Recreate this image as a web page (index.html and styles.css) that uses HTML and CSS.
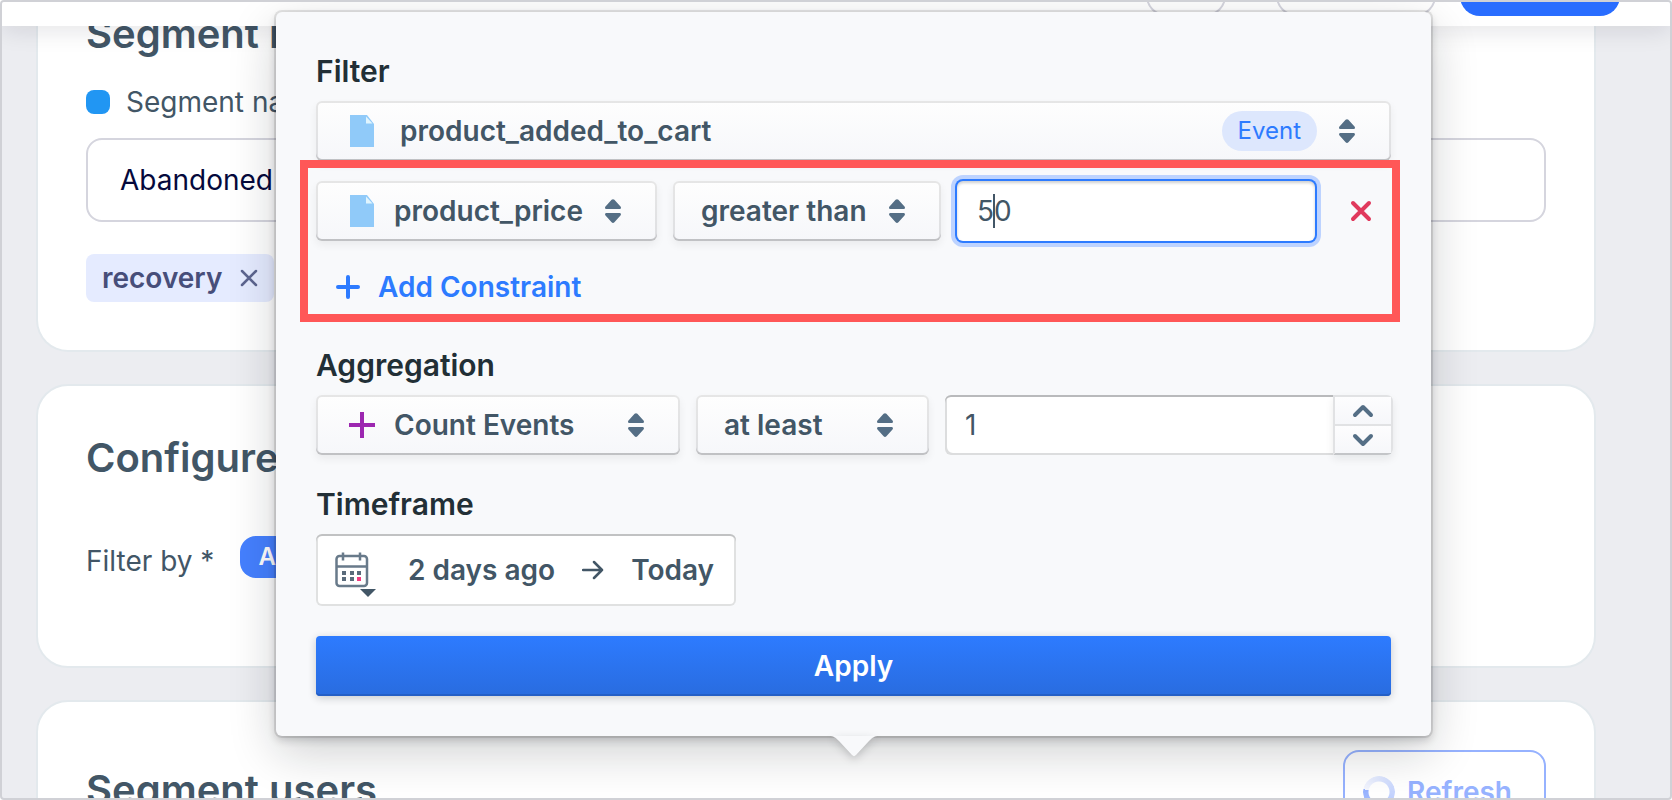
FILE: index.html
```
<!DOCTYPE html>
<html lang="en">
<head>
  <meta charset="UTF-8" />
  <meta name="viewport" content="width=device-width, initial-scale=1.0"/>
  <title>Segment</title>
  <link rel="stylesheet" href="styles.css">
</head>
<body>

<!-- shared icons -->
<svg class="sprite" aria-hidden="true">
  <symbol id="icon-file" viewBox="0 0 24 32">
    <path fill="#90caf9" d="M0 0h17l7 9v23H0z"/>
    <path fill="#e1f5fe" d="M16 1.500v7h6.500z"/>
  </symbol>
  <symbol id="icon-sort" viewBox="0 0 16 24">
    <path fill="#546e85" d="M1.500 10h13c1.300 0 2-1.400 1-2.400L9.400.800c-.8-.9-2-.9-2.800 0L.5 7.600c-1 1-.3 2.400 1 2.400zM1.500 14h13c1.300 0 2 1.400 1 2.400l-6.100 6.800c-.8.9-2 .9-2.800 0L.5 16.400c-1-1-.3-2.400 1-2.400z"/>
  </symbol>
</svg>

<div class="app">
  <header class="topbar">
    <button type="button" class="top-btn top-small" aria-label="More"></button>
    <button type="button" class="top-btn top-wide" aria-label="Preview"></button>
    <button type="button" class="top-btn top-primary" aria-label="Save"></button>
  </header>

  <main>
    <section class="card card-info">
      <h2>Segment information</h2>
      <label class="name-label" for="segment-name"><span class="swatch"></span>Segment name *</label>
      <input class="name-input" type="text" id="segment-name" value="Abandoned cart">
      <div class="tag">recovery
        <button type="button" aria-label="Remove tag">
          <svg width="18" height="18" viewBox="0 0 18 18"><path d="M2 2l14 14M16 2L2 16" stroke="#5d6590" stroke-width="2.500" stroke-linecap="round"/></svg>
        </button>
      </div>
    </section>

    <section class="card card-configure">
      <h2>Configure segment</h2>
      <div class="filter-by">
        <span class="filter-label">Filter by *</span>
        <button type="button" class="pill">All users</button>
      </div>
    </section>

    <section class="card card-users">
      <h2>Segment users</h2>
      <button type="button" class="refresh">
        <span class="spinner"></span>
        Refresh
      </button>
    </section>
  </main>

  <form class="popover">
    <h3>Filter</h3>
    <div class="select">
      <svg class="lead" width="24" height="32"><use href="#icon-file"/></svg>
      <select class="has-icon wide" aria-label="Event"><option>product_added_to_cart</option></select>
      <span class="badge">Event</span>
      <svg class="sort" width="16" height="24"><use href="#icon-sort"/></svg>
    </div>

    <div class="constraints">
      <div class="row">
        <div class="select property">
          <svg class="lead" width="24" height="32"><use href="#icon-file"/></svg>
          <select class="has-icon" aria-label="Property"><option>product_price</option></select>
          <svg class="sort" width="16" height="24"><use href="#icon-sort"/></svg>
        </div>
        <div class="select operator">
          <select aria-label="Operator"><option>greater than</option></select>
          <svg class="sort" width="16" height="24"><use href="#icon-sort"/></svg>
        </div>
        <div class="value">
          <input type="text" class="field active" aria-label="Value" value="50">
          <span class="caret"></span>
        </div>
        <button type="button" class="remove" aria-label="Remove constraint">
          <svg width="22" height="22" viewBox="0 0 22 22"><path d="M3 3l16 16M19 3L3 19" stroke="#e0395c" stroke-width="4" stroke-linecap="round"/></svg>
        </button>
      </div>
      <button type="button" class="add">
        <svg width="24" height="24" viewBox="0 0 24 24"><path d="M12 2v20M2 12h20" stroke="#2d7bff" stroke-width="4" stroke-linecap="round"/></svg>
        Add Constraint
      </button>
    </div>

    <h3>Aggregation</h3>
    <div class="row aggregation">
      <div class="select count">
        <svg class="lead" width="28" height="28" viewBox="0 0 28 28"><path d="M14 1v26M1 14h26" stroke="#9c27b0" stroke-width="4"/></svg>
        <select class="has-icon" aria-label="Aggregation"><option>Count Events</option></select>
        <svg class="sort" width="16" height="24"><use href="#icon-sort"/></svg>
      </div>
      <div class="select compare">
        <select aria-label="Comparison"><option>at least</option></select>
        <svg class="sort" width="16" height="24"><use href="#icon-sort"/></svg>
      </div>
      <div class="number">
        <input type="text" inputmode="numeric" class="field" aria-label="Amount" value="1">
        <div class="stepper">
          <button type="button" aria-label="Increase">
            <svg width="22" height="14" viewBox="0 0 22 14"><path d="M3 11l8-8 8 8" fill="none" stroke="#546e85" stroke-width="4" stroke-linecap="round" stroke-linejoin="round"/></svg>
          </button>
          <button type="button" aria-label="Decrease">
            <svg width="22" height="14" viewBox="0 0 22 14"><path d="M3 3l8 8 8-8" fill="none" stroke="#546e85" stroke-width="4" stroke-linecap="round" stroke-linejoin="round"/></svg>
          </button>
        </div>
      </div>
    </div>

    <h3>Timeframe</h3>
    <button type="button" class="timeframe">
      <svg class="calendar" width="47" height="48" viewBox="0 0 47 48">
        <g fill="none" stroke="#687a8a" stroke-width="2.500">
          <rect x="2.500" y="5" width="30.500" height="30" rx="3"/>
          <path d="M2 15.500h31M9 1.500v8M26 1.500v8"/>
        </g>
        <path fill="#5a6b7b" d="M8 20h4v4H8zM16 20h4v4h-4zM23 20h4v4h-4zM8 26h4v4H8zM16 26h4v4h-4z"/>
        <path fill="#f5397f" d="M23 26h4v4h-4z"/>
        <path fill="#425666" d="M26 38h16l-8 8z"/>
      </svg>
      <span>2 days ago</span>
      <svg width="22" height="20" viewBox="0 0 22 20"><path d="M1 10h19M12 2l8 8-8 8" fill="none" stroke="#425666" stroke-width="2.500" stroke-linecap="round" stroke-linejoin="round"/></svg>
      <span>Today</span>
    </button>

    <button type="submit" class="apply">Apply</button>
    <svg class="arrow" width="50" height="21" viewBox="0 0 50 21"><path fill="#f8f9fb" d="M0 0c5 0 7 2 10 5l13 14c1.500 1.500 2.500 1.500 4 0L40 5c3-3 5-5 10-5z"/></svg>
  </form>
</div>

</body>
</html>
```
FILE: styles.css
```
* {
  box-sizing: border-box;
}
body {
  margin: 0;
  font-family: Inter, "Liberation Sans", sans-serif;
  font-size: 28px;
  line-height: 34px;
  color: #425666;
}
button, input, select {
  font: inherit;
  color: inherit;
  margin: 0;
  padding: 0;
  border: none;
  background: none;
}
button {
  cursor: pointer;
}
svg {
  display: block;
  flex: none;
}
h2 {
  margin: 0;
  font-size: 40px;
  line-height: 48px;
  font-weight: 600;
}
h3 {
  margin: 31px 0 12px;
  font-size: 30px;
  line-height: 36px;
  font-weight: 600;
  color: #222f36;
}
.sprite {
  position: absolute;
  width: 0;
  height: 0;
}
.app {
  position: relative;
  height: 100vh;
  overflow: hidden;
  border: 2px solid #d0d1d6;
  border-radius: 4px;
  background: #ecedf1;
}

/* top bar */
.topbar {
  position: absolute;
  z-index: 1;
  top: 0;
  left: 0;
  right: 0;
  height: 24px;
  padding-right: 50px;
  display: flex;
  justify-content: flex-end;
  align-items: flex-end;
  background: white;
  box-shadow: 0 4px 24px rgba(20, 20, 40, 0.12);
}
.top-btn {
  height: 64px;
  margin-bottom: 10px;
  border: 2px solid #d5d5de;
  border-radius: 20px;
}
.top-small {
  width: 80px;
  margin-right: 50px;
}
.top-wide {
  width: 160px;
  margin-right: 24px;
}
.top-primary {
  width: 160px;
  border: none;
  background: #296dff;
}

/* cards */
main {
  display: flex;
  flex-direction: column;
  gap: 32px;
  padding: 0 74px 0 34px;
}
.card {
  padding: 48px;
  border: 2px solid #e3e9ed;
  border-radius: 32px;
  background: white;
}
.card-info {
  padding-top: 8px;
  border-top: none;
  border-radius: 0 0 32px 32px;
}
.name-label {
  display: flex;
  align-items: center;
  gap: 16px;
  margin-top: 27px;
}
.swatch {
  width: 24px;
  height: 24px;
  border-radius: 8px;
  background: #2196f3;
}
.name-input {
  display: block;
  width: 100%;
  height: 84px;
  margin: 19px 0 32px;
  padding: 0 32px;
  border: 2px solid #d5d5de;
  border-radius: 16px;
  color: #05093c;
}
.tag {
  display: inline-flex;
  align-items: center;
  gap: 18px;
  height: 48px;
  padding: 0 16px;
  border-radius: 8px;
  font-weight: 600;
  color: #474e7a;
  background: #e5ebff;
  vertical-align: top;
}
.filter-by {
  display: flex;
  align-items: flex-start;
  gap: 26px;
  margin-top: 54px;
}
.filter-label {
  padding-top: 8px;
}
.pill {
  height: 42px;
  padding: 0 18px;
  border-radius: 16px;
  font-size: 24px;
  font-weight: 600;
  color: white;
  background: #4580ff;
}
.card-configure {
  padding-bottom: 88px;
}
.card-users {
  display: flex;
  justify-content: space-between;
}
.card-users h2 {
  margin-top: 16px;
}
.refresh {
  display: flex;
  align-items: center;
  gap: 12px;
  height: 84px;
  padding: 0 32px 0 18px;
  border: 2px solid #96b2ff;
  border-radius: 16px;
  font-weight: 600;
  color: #96b2ff;
}
.spinner {
  width: 32px;
  height: 32px;
  border-radius: 50%;
  background: conic-gradient(from 280deg, #f4f6fe, #96b2ff);
  mask: radial-gradient(closest-side, transparent 10px, black 11px);
}

/* popover */
.popover {
  position: absolute;
  z-index: 2;
  top: 10px;
  left: 274px;
  right: 239px;
  padding: 10px 40px 40px;
  border-radius: 6px;
  background: #f8f9fb;
  box-shadow: 0 0 0 2px rgba(17, 20, 24, 0.1), 0 4px 8px rgba(17, 20, 24, 0.2), 0 16px 48px rgba(17, 20, 24, 0.2);
}
.arrow {
  position: absolute;
  top: 100%;
  left: 50%;
  margin-left: -25px;
  filter: drop-shadow(0 3px 4px rgba(17, 20, 24, 0.2));
}
.row {
  display: flex;
  gap: 16px;
}
.select {
  position: relative;
}
.select select {
  display: block;
  width: 100%;
  height: 60px;
  padding: 0 60px 0 28px;
  appearance: none;
  border-radius: 6px;
  font-weight: 600;
  background: linear-gradient(#fefefe, #f6f7fa);
  box-shadow: inset 0 0 0 2px rgba(17, 20, 24, 0.1), inset 0 -2px 0 rgba(17, 20, 24, 0.15), 0 4px 8px rgba(17, 20, 24, 0.06);
}
.select .has-icon {
  padding-left: 78px;
}
.select .wide {
  padding-left: 84px;
}
.lead, .sort, .badge {
  position: absolute;
  top: 50%;
  transform: translateY(-50%);
  pointer-events: none;
}
.lead {
  left: 34px;
}
.count .lead {
  left: 32px;
}
.sort {
  right: 36px;
}
.badge {
  right: 74px;
  height: 40px;
  padding: 0 16px;
  border-radius: 20px;
  font-size: 24px;
  line-height: 40px;
  color: #2d7bff;
  background: #dde7fd;
}
.property {
  width: 341px;
}
.operator {
  width: 268px;
}
.count {
  width: 364px;
}
.compare {
  width: 233px;
}

/* red frame around the constraint rows */
.constraints {
  position: relative;
  padding-top: 20px;
}
.constraints::after {
  content: "";
  position: absolute;
  inset: -1px -9px -6px -16px;
  border: 8px solid #ff5757;
  pointer-events: none;
}
.value {
  position: relative;
  flex: 1;
}
.field {
  display: block;
  width: 100%;
  height: 60px;
  padding: 0 20px;
  border-radius: 6px;
  background: white;
}
.field.active {
  box-shadow: 0 0 0 2px #2d7bff, 0 0 0 6px #bdd3ff, inset 0 2px 3px rgba(17, 20, 24, 0.2);
}
.caret {
  position: absolute;
  top: 13px;
  left: 36px;
  width: 2px;
  height: 34px;
  background: #425666;
}
.remove {
  display: flex;
  align-items: center;
  justify-content: center;
  width: 60px;
}
.add {
  display: flex;
  align-items: center;
  gap: 18px;
  height: 58px;
  margin-top: 17px;
  padding: 0 20px;
  font-weight: 600;
  color: #2d7bff;
}
.aggregation {
  margin-right: -2px;
}
.number {
  display: flex;
  flex: 1;
}
.number .field {
  flex: 1;
  min-width: 0;
  border-radius: 6px 0 0 6px;
  box-shadow: inset 0 2px 0 #b9babc, inset 2px -2px 0 #dcddde;
}
.stepper {
  display: flex;
  flex-direction: column;
  width: 60px;
  border: 2px solid #e1e2e4;
  border-bottom-color: #c3c5c8;
  border-radius: 0 6px 6px 0;
  box-shadow: 0 4px 8px rgba(17, 20, 24, 0.08);
}
.stepper button {
  display: flex;
  flex: 1;
  align-items: center;
  justify-content: center;
  background: linear-gradient(#fdfdfe, #f6f7fa);
}
.stepper button + button {
  border-top: 2px solid #e1e2e4;
}
.timeframe {
  display: flex;
  align-items: center;
  gap: 27px;
  height: 72px;
  padding: 0 22px 0 18px;
  border-radius: 6px;
  font-weight: 600;
  background: white;
  box-shadow: inset 0 0 0 2px rgba(17, 20, 24, 0.13), inset 0 2px 0 rgba(17, 20, 24, 0.15);
}
.calendar {
  margin-top: 10px;
}
.apply {
  display: block;
  width: 100%;
  height: 60px;
  margin-top: 30px;
  border-radius: 4px;
  font-weight: 600;
  color: white;
  background: linear-gradient(#2d7bff, #296cdf);
  box-shadow: inset 0 -2px 0 #245fc6, 0 2px 8px rgba(17, 20, 24, 0.2);
}
```
